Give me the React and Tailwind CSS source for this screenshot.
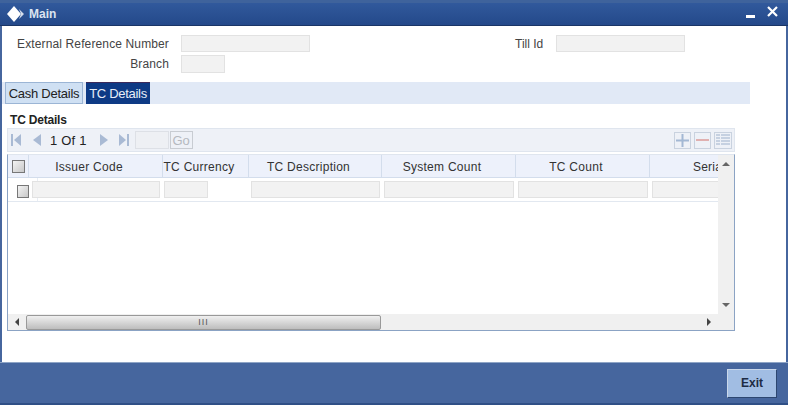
import React from 'react';

const font = { fontFamily: '"Liberation Sans", Arial, sans-serif' };

const columns = [
  { label: 'Issuer Code', width: 'w-[134px]', input: 'w-[128px] ml-[3px]' },
  { label: 'TC Currency', width: 'w-[86px]', input: 'w-[44px] ml-[1px]' },
  { label: 'TC Description', width: 'w-[133px]', input: 'w-[129px] ml-[2px]' },
  { label: 'System Count', width: 'w-[134px]', input: 'w-[130px] ml-[2px]' },
  { label: 'TC Count', width: 'w-[134px]', input: 'w-[130px] ml-[2px]' },
  { label: 'Serial Number', width: 'w-[180px]', input: 'w-[130px] ml-[2px]' },
];

const Field = ({ className }) => (
  <div className={`h-[17px] bg-[#f2f2f2] border border-[#e2e2e2] ${className}`} />
);

const Check = () => (
  <div className="w-[13px] h-[13px] border border-[#777] bg-gradient-to-br from-[#f4f4f4] to-[#c8c8c8]" />
);

const PagerIcon = ({ points, bar }) => (
  <svg width="10" height="12" viewBox="0 0 10 12" fill="#a9bad4">
    <polygon points={points} />
    {bar !== undefined && <rect x={bar} y="0" width="2" height="12" />}
  </svg>
);

const App = () => {
  return (
    <div style={font} className="w-[788px] h-[405px] flex flex-col overflow-hidden bg-[#46669e] text-[13px] leading-[15px] text-[#333]">
      <div className="h-[26px] shrink-0 flex items-center bg-gradient-to-b from-[#31599c] to-[#24498a] border-t-[3px] border-t-[#3f639c] border-b border-b-[#1a3566] pl-[7px] pr-[10px]">
        <svg width="18" height="16" viewBox="0 0 18 16">
          <polygon points="7,0 14,8 7,16 0,8" fill="#fff" />
          <polygon points="12,3 17,8 12,13 14,8" fill="#d5deec" />
        </svg>
        <span className="ml-[4px] text-[12px] font-bold text-[#dbe3f0]">Main</span>
        <div className="ml-auto w-[9px] h-[3px] bg-white mt-[5px]" />
        <svg className="ml-[12px] mb-[5px]" width="11" height="11" viewBox="0 0 11 11" stroke="#fff" strokeWidth="2.2">
          <path d="M1 1 L10 10 M10 1 L1 10" />
        </svg>
      </div>

      <div className="h-[336px] shrink-0 ml-[2px] mr-[2px] bg-white flex flex-col">
        <div className="flex pt-[9px] h-[56px] shrink-0">
          <div className="w-[167px] flex flex-col items-end gap-[4px] text-[#444] text-[12px]">
            <div className="h-[17px] leading-[19px] whitespace-nowrap tracking-[0.13px]">External Reference Number</div>
            <div className="h-[17px] leading-[17px] tracking-[0.13px]">Branch</div>
          </div>
          <div className="ml-[12px] flex flex-col gap-[3px]">
            <Field className="w-[129px]" />
            <Field className="w-[44px] h-[18px]" />
          </div>
          <div className="ml-[205px] h-[17px] leading-[19px] text-[12px] text-[#444]">Till Id</div>
          <Field className="ml-[13px] w-[129px]" />
        </div>

        <div className="h-[22px] w-[748px] shrink-0 bg-[#e1e9f6] flex pl-[3px] gap-[3px]">
          <div className="w-[78px] bg-[#cfe0f3] border border-[#9bb5d5] flex items-center justify-center text-[#222] tracking-[-0.25px]">Cash Details</div>
          <div className="w-[64px] bg-[#0e3a85] border-t border-t-[#3c2a5a] flex items-center justify-center text-[#e8eef8] tracking-[-0.3px]">TC Details</div>
        </div>

        <div className="h-[24px] pt-[9px] pl-[8px] shrink-0 text-[12px] font-bold text-[#222] leading-[14px] tracking-[-0.2px]">TC Details</div>

        <div className="ml-[5px] w-[728px] h-[24px] shrink-0 bg-[#eef1f7] border border-[#dfe5ee] flex items-center pl-[3px] pr-[2px]">
          <PagerIcon points="10,0 3,6 10,12" bar={0} />
          <div className="ml-[12px] flex"><PagerIcon points="8,0 0,6 8,12" /></div>
          <span className="ml-[7px] text-[#222] tracking-[0.2px]">1 Of 1</span>
          <div className="ml-[13px] flex"><PagerIcon points="0,0 8,6 0,12" /></div>
          <div className="ml-[9px] flex"><PagerIcon points="0,0 7,6 0,12" bar={8} /></div>
          <div className="ml-[6px] w-[34px] h-[18px] bg-[#eef0f4] border border-[#dde0e6]" />
          <div className="ml-[1px] w-[23px] h-[18px] border border-[#c8ccd2] text-[#b5b9bf] flex items-center justify-center">Go</div>
          <div className="ml-auto flex gap-[3px]">
            <div className="w-[17px] h-[17px] border border-[#c9d2df] flex items-center justify-center">
              <svg width="13" height="13" viewBox="0 0 13 13" fill="#a3b8d4"><path d="M5.5 0h2v5.5H13v2H7.5V13h-2V7.5H0v-2h5.5z" /></svg>
            </div>
            <div className="w-[17px] h-[17px] border border-[#c9d2df] flex items-center justify-center">
              <div className="w-[13px] h-[2px] bg-[#e0b0b0]" />
            </div>
            <div className="w-[18px] h-[17px] border border-[#c9d2df] flex items-center justify-center">
              <svg width="14" height="12" viewBox="0 0 14 12" fill="#c6d1e1"><path d="M0 0h4v2H0zM5 0h9v2H5zM0 3h4v2H0zM5 3h9v2H5zM0 6h4v2H0zM5 6h9v2H5zM0 9h4v2H0zM5 9h9v2H5z" /></svg>
            </div>
          </div>
        </div>

        <div className="mt-[2px] ml-[5px] w-[728px] h-[177px] shrink-0 border border-[#8ba3c4] border-t-[#dfe5ee] flex flex-col">
          <div className="flex flex-1 min-h-0">
            <div className="w-[710px] overflow-hidden">
              <div className="flex w-[1000px] h-[23px] bg-[#edf1fb] border-b border-b-[#d3ddec]">
                <div className="w-[21px] shrink-0 border-r border-r-[#d3ddec] flex items-center justify-center"><Check /></div>
                {columns.map((c) => (
                  <div key={c.label} className={`${c.width} shrink-0 border-r border-r-[#d3ddec] flex items-center justify-center pr-[13px] pt-[3px] text-[12px] tracking-[0.27px] text-[#333] whitespace-nowrap`}>{c.label}</div>
                ))}
              </div>
              <div className="relative flex w-[1000px] h-[24px] border-b border-b-[#e2e8f0] items-center">
                <div className="absolute left-[29px] top-0 h-full w-px bg-[#e8edf4]" />
                <div className="w-[21px] shrink-0 flex items-center justify-center pl-[9px] pt-[4px]"><Check /></div>
                {columns.map((c) => (
                  <div key={c.label} className={`${c.width} relative shrink-0`}>
                    <Field className={c.input} />
                  </div>
                ))}
              </div>
            </div>
            <div className="w-[16px] bg-[#f0f0f0] flex flex-col items-center justify-between py-[7px]">
              <div className="w-0 h-0 border-x-[4px] border-x-transparent border-b-[4px] border-b-[#666]" />
              <div className="w-0 h-0 border-x-[4px] border-x-transparent border-t-[4px] border-t-[#666]" />
            </div>
          </div>
          <div className="h-[16px] shrink-0 bg-[#f0f0f0] flex items-center">
            <div className="w-[18px] flex justify-center">
              <div className="w-0 h-0 border-y-[4px] border-y-transparent border-r-[4px] border-r-[#444]" />
            </div>
            <div className="w-[355px] h-[15px] border border-[#999] rounded-[2px] bg-gradient-to-b from-[#f0f0f0] to-[#bdbdbd] flex items-center justify-center text-[9px] text-[#555] tracking-[1px]">III</div>
            <div className="ml-auto w-[27px] flex">
              <div className="w-0 h-0 border-y-[4px] border-y-transparent border-l-[4px] border-l-[#444]" />
            </div>
          </div>
        </div>
      </div>

      <div className="flex-1 flex items-start justify-end pt-[6px] pr-[11px] border-t border-t-[#8fa5c6] border-b-2 border-b-[#2f4f86] bg-[#46669e]">
        <div className="w-[50px] h-[29px] bg-[#a1bde3] border border-[#c9d7ea] border-b-[#2c4670] border-r-[#2c4670] flex items-center justify-center text-[12px] font-bold text-[#1d2b44]">Exit</div>
      </div>
    </div>
  );
};

export default App;
